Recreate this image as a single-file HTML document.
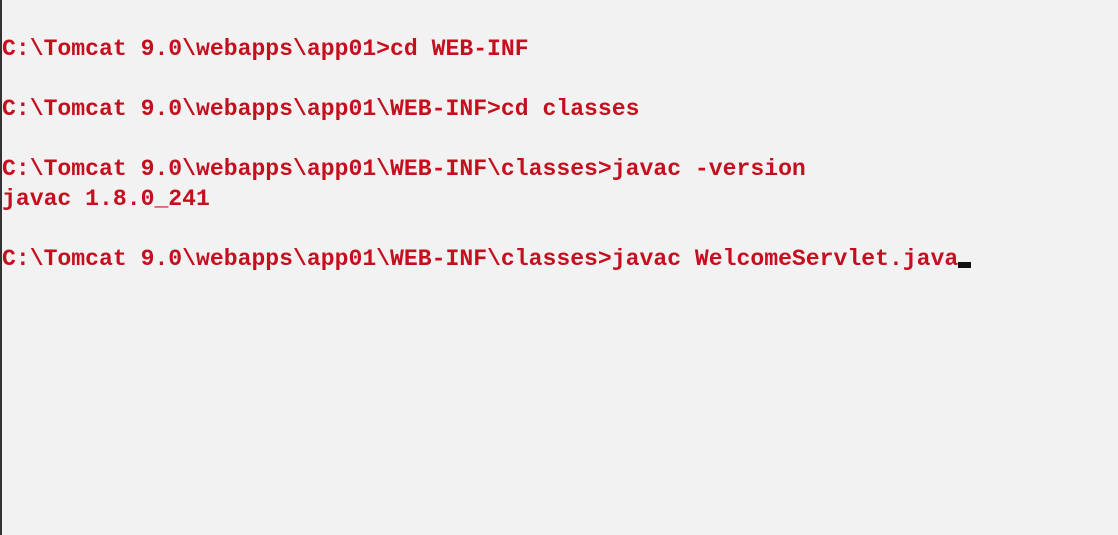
<!DOCTYPE html>
<html><head><meta charset="utf-8"><style>
html,body{margin:0;padding:0;}
body{width:1118px;height:535px;background:#f2f2f2;overflow:hidden;position:relative;}
.bar{position:absolute;left:0;top:0;width:2px;height:535px;background:#333;}
pre{position:absolute;left:2px;top:4px;margin:0;font-family:"Liberation Mono",monospace;font-weight:bold;font-size:23.1px;line-height:30px;color:#c50f1f;letter-spacing:0;}
.cur{display:inline-block;width:13px;height:6px;background:#111;vertical-align:-3px;}
</style></head><body>
<div class="bar"></div>
<pre>

C:\Tomcat 9.0\webapps\app01>cd WEB-INF

C:\Tomcat 9.0\webapps\app01\WEB-INF>cd classes

C:\Tomcat 9.0\webapps\app01\WEB-INF\classes>javac -version
javac 1.8.0_241

C:\Tomcat 9.0\webapps\app01\WEB-INF\classes>javac WelcomeServlet.java<span class="cur"></span></pre>
</body></html>
